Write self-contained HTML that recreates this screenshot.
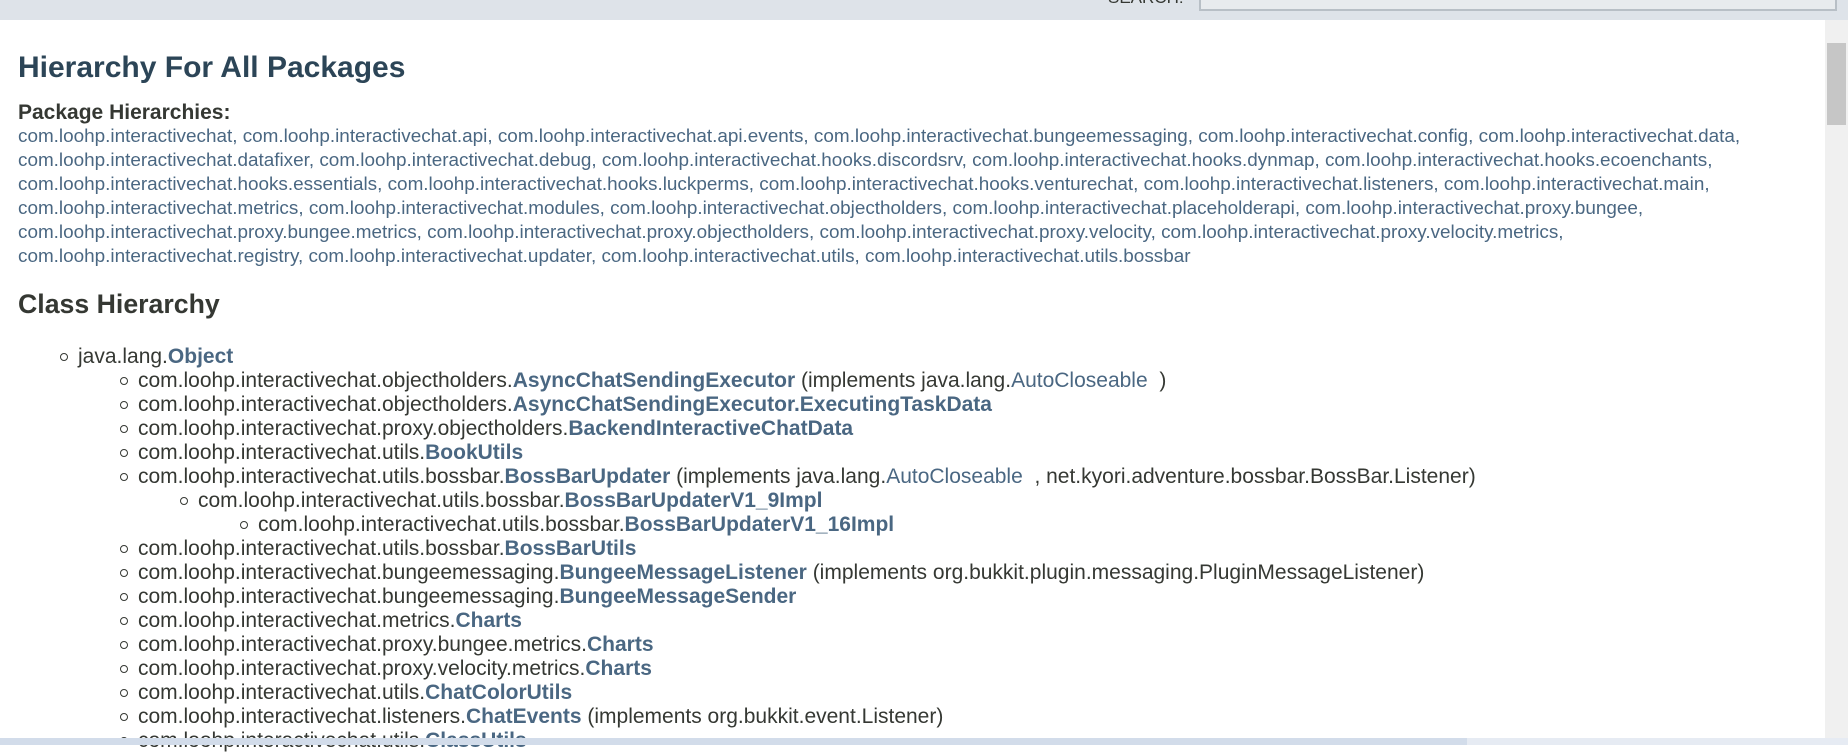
<!DOCTYPE html>
<html><head><meta charset="utf-8"><style>
*{margin:0;padding:0;box-sizing:border-box}
html,body{width:1848px;height:745px;overflow:hidden;background:#fff;font-family:"Liberation Sans",Arial,sans-serif;color:#353833}
.hdr{position:absolute;left:0;top:0;width:1848px;height:20px;background:#dee3e9}
.sbox{position:absolute;left:1199px;top:-12px;width:638px;height:23px;background:#e8ebee;border:2px solid #b8bfc6;border-top:none}
.lbl{position:absolute;left:1108px;top:-12px;font-size:17px;color:#353833}
.vs{position:absolute;left:1825px;top:20px;width:23px;height:718px;background:#f0f0f0}
.th{position:absolute;left:1827px;top:43px;width:19px;height:82px;background:#c6c6c6}
.hs{position:absolute;left:0;top:738px;width:1848px;height:7px;background:#e6ebf3}
.ht{position:absolute;left:0;top:738px;width:1467px;height:7px;background:#d2dcea}
h1{position:absolute;left:18px;top:51px;font-size:30px;color:#2c4557;font-weight:bold;white-space:nowrap}
.ph{position:absolute;left:18px;top:101px;font-size:21px;font-weight:bold;white-space:nowrap}
.pk{position:absolute;left:18px;top:125px;font-size:18.9px;line-height:24px;color:#4a6782;white-space:nowrap}
h2{position:absolute;left:18px;top:289px;font-size:26.7px;font-weight:bold;white-space:nowrap}
.it{position:absolute;font-size:21px;white-space:nowrap;line-height:24px}
.it::before{content:"";position:absolute;left:-18px;top:8px;width:6px;height:6px;border:1px solid #353833;border-radius:50%}
a,b{color:#4a6782;text-decoration:none}
</style></head><body>
<div class="hdr"></div>
<div class="lbl">SEARCH:</div>
<div class="sbox"></div>
<h1>Hierarchy For All Packages</h1>
<div class="ph">Package Hierarchies:</div>
<div class="pk">com.loohp.interactivechat, com.loohp.interactivechat.api, com.loohp.interactivechat.api.events, com.loohp.interactivechat.bungeemessaging, com.loohp.interactivechat.config, com.loohp.interactivechat.data,<br>
com.loohp.interactivechat.datafixer, com.loohp.interactivechat.debug, com.loohp.interactivechat.hooks.discordsrv, com.loohp.interactivechat.hooks.dynmap, com.loohp.interactivechat.hooks.ecoenchants,<br>
com.loohp.interactivechat.hooks.essentials, com.loohp.interactivechat.hooks.luckperms, com.loohp.interactivechat.hooks.venturechat, com.loohp.interactivechat.listeners, com.loohp.interactivechat.main,<br>
com.loohp.interactivechat.metrics, com.loohp.interactivechat.modules, com.loohp.interactivechat.objectholders, com.loohp.interactivechat.placeholderapi, com.loohp.interactivechat.proxy.bungee,<br>
com.loohp.interactivechat.proxy.bungee.metrics, com.loohp.interactivechat.proxy.objectholders, com.loohp.interactivechat.proxy.velocity, com.loohp.interactivechat.proxy.velocity.metrics,<br>
com.loohp.interactivechat.registry, com.loohp.interactivechat.updater, com.loohp.interactivechat.utils, com.loohp.interactivechat.utils.bossbar</div>
<h2>Class Hierarchy</h2>
<div class="it" style="left:78px;top:345px">java.lang.<b>Object</b></div>
<div class="it" style="left:138px;top:369px">com.loohp.interactivechat.objectholders.<b>AsyncChatSendingExecutor</b> (implements java.lang.<a>AutoCloseable</a> &nbsp;)</div>
<div class="it" style="left:138px;top:393px">com.loohp.interactivechat.objectholders.<b>AsyncChatSendingExecutor.ExecutingTaskData</b></div>
<div class="it" style="left:138px;top:417px">com.loohp.interactivechat.proxy.objectholders.<b>BackendInteractiveChatData</b></div>
<div class="it" style="left:138px;top:441px">com.loohp.interactivechat.utils.<b>BookUtils</b></div>
<div class="it" style="left:138px;top:465px">com.loohp.interactivechat.utils.bossbar.<b>BossBarUpdater</b> (implements java.lang.<a>AutoCloseable</a> &nbsp;, net.kyori.adventure.bossbar.BossBar.Listener)</div>
<div class="it" style="left:198px;top:489px">com.loohp.interactivechat.utils.bossbar.<b>BossBarUpdaterV1_9Impl</b></div>
<div class="it" style="left:258px;top:513px">com.loohp.interactivechat.utils.bossbar.<b>BossBarUpdaterV1_16Impl</b></div>
<div class="it" style="left:138px;top:537px">com.loohp.interactivechat.utils.bossbar.<b>BossBarUtils</b></div>
<div class="it" style="left:138px;top:561px">com.loohp.interactivechat.bungeemessaging.<b>BungeeMessageListener</b> (implements org.bukkit.plugin.messaging.PluginMessageListener)</div>
<div class="it" style="left:138px;top:585px">com.loohp.interactivechat.bungeemessaging.<b>BungeeMessageSender</b></div>
<div class="it" style="left:138px;top:609px">com.loohp.interactivechat.metrics.<b>Charts</b></div>
<div class="it" style="left:138px;top:633px">com.loohp.interactivechat.proxy.bungee.metrics.<b>Charts</b></div>
<div class="it" style="left:138px;top:657px">com.loohp.interactivechat.proxy.velocity.metrics.<b>Charts</b></div>
<div class="it" style="left:138px;top:681px">com.loohp.interactivechat.utils.<b>ChatColorUtils</b></div>
<div class="it" style="left:138px;top:705px">com.loohp.interactivechat.listeners.<b>ChatEvents</b> (implements org.bukkit.event.Listener)</div>
<div class="it" style="left:138px;top:729px">com.loohp.interactivechat.utils.<b>ClassUtils</b></div>
<div class="vs"></div><div class="th"></div>
<div class="hs"></div><div class="ht"></div>
</body></html>
